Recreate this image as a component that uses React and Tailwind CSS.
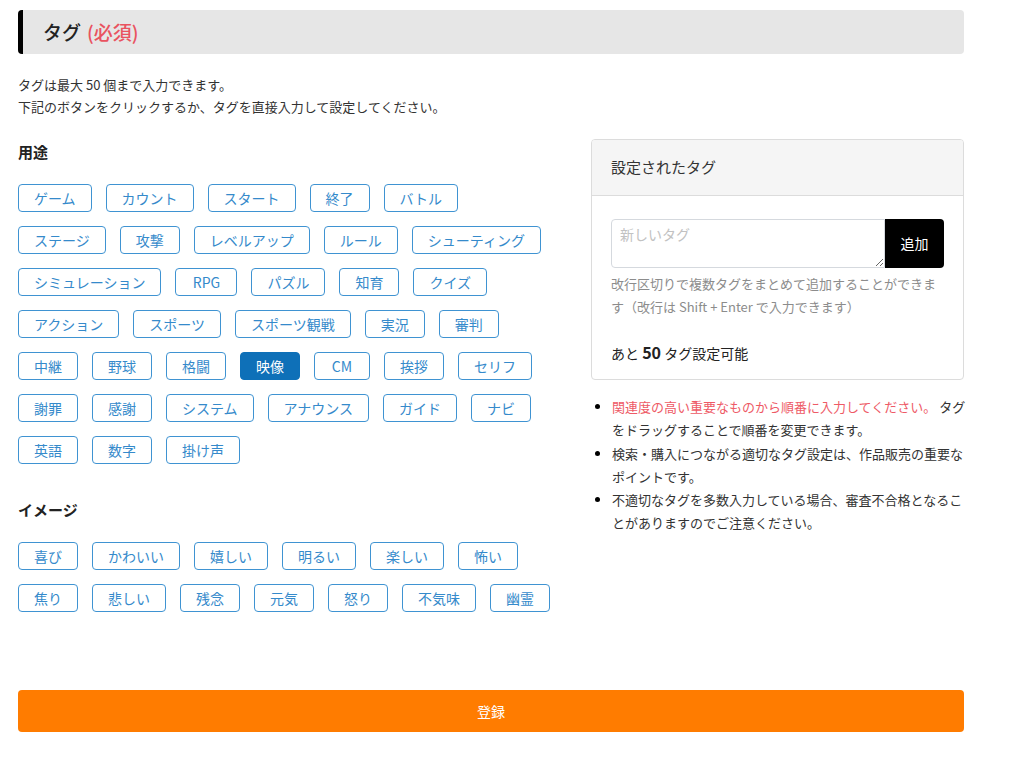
import React from "react";

const FONT = "font-['Noto_Sans_CJK_JP','Noto_Sans',sans-serif]";

const usage = [
  ["ゲーム"], ["カウント"], ["スタート"], ["終了"], ["バトル"],
  ["ステージ"], ["攻撃"], ["レベルアップ"], ["ルール"], ["シューティング"],
  ["シミュレーション"], ["RPG", "w-[62px]"], ["パズル"], ["知育"], ["クイズ"],
  ["アクション"], ["スポーツ"], ["スポーツ観戦"], ["実況"], ["審判"],
  ["中継"], ["野球"], ["格闘"], ["映像", "", true], ["CM", "w-[56px]"], ["挨拶"], ["セリフ"],
  ["謝罪"], ["感謝"], ["システム"], ["アナウンス"], ["ガイド"], ["ナビ"],
  ["英語"], ["数字"], ["掛け声"],
];

const image = [
  ["喜び"], ["かわいい"], ["嬉しい"], ["明るい"], ["楽しい"], ["怖い"],
  ["焦り"], ["悲しい"], ["残念"], ["元気"], ["怒り"], ["不気味"], ["幽霊"],
];

function Tag({ label, w = "", active = false }) {
  return (
    <button
      className={
        "h-[28px] rounded-[4px] border text-[14px] leading-none flex items-center justify-center " +
        w +
        (w ? " " : " px-[15px] ") +
        (active
          ? "bg-[#0e70b8] border-[#0e70b8] text-white"
          : "bg-white border-[#3f93d2] text-[#358acb]")
      }
    >
      {label}
    </button>
  );
}

function TagGroup({ items }) {
  return (
    <div className="flex flex-wrap gap-x-[14px] gap-y-[14px]">
      {items.map(([l, w, a]) => (
        <Tag key={l} label={l} w={w || ""} active={!!a} />
      ))}
    </div>
  );
}

export default function App() {
  return (
    <div className={"bg-white min-h-[778px] w-[1024px] text-[#222] " + FONT}>
      <div className="ml-[18px] w-[946px] pt-[10px]">
        <div className="h-[44px] bg-[#e6e6e6] border-l-[5px] border-black rounded-[4px] flex items-center pl-[20px]">
          <span className="text-[19px] font-medium text-[#222]">タグ</span>
          <span className="text-[19px] font-medium text-[#e9535f] ml-[6px]">(必須)</span>
        </div>

        <div className="mt-[20px] text-[13px] leading-[22px] text-[#333]">
          <p>タグは最大 50 個まで入力できます。</p>
          <p>下記のボタンをクリックするか、タグを直接入力して設定してください。</p>
        </div>

        <div className="flex mt-[20px]">
          <div className="w-[540px]">
            <h3 className="text-[15px] font-bold leading-[28px] text-[#222]">用途</h3>
            <div className="mt-[18px]">
              <TagGroup items={usage} />
            </div>
            <h3 className="text-[15px] font-bold leading-[28px] mt-[32px] text-[#222]">イメージ</h3>
            <div className="mt-[18px]">
              <TagGroup items={image} />
            </div>
          </div>

          <div className="ml-auto w-[373px] mt-[1px]">
            <div className="border border-[#dcdcdc] rounded-[4px] overflow-hidden">
              <div className="h-[56px] bg-[#f5f5f5] border-b border-[#dcdcdc] flex items-center px-[19px] text-[15px] text-[#333]">
                設定されたタグ
              </div>
              <div className="px-[19px] pt-[23px] pb-[14px]">
                <div className="flex h-[49px]">
                  <textarea
                    placeholder="新しいタグ"
                    className="flex-1 h-[49px] border border-[#d5d9de] rounded-l-[4px] px-[8px] py-[3px] text-[14px] leading-[22px] placeholder:text-[#c2c2c2] outline-none"
                  />
                  <button className="w-[59px] h-[49px] bg-black text-white text-[14px] rounded-r-[4px]">
                    追加
                  </button>
                </div>
                <p className="mt-[4px] text-[13px] leading-[23px] text-[#8c8c8c]">
                  改行区切りで複数タグをまとめて追加することができます（改行は Shift + Enter で入力できます）
                </p>
                <p className="mt-[22px] text-[14px] leading-[24px] text-[#222]">
                  あと <span className="font-bold text-[16px]">50</span> タグ設定可能
                </p>
              </div>
            </div>

            <ul className="mt-[15px] w-[380px] list-disc pl-[21px] text-[13px] leading-[23.3px] text-[#333] marker:text-black">
              <li>
                <span className="text-[#ee5a66]">関連度の高い重要なものから順番に入力してください。</span>
                {" "}タグをドラッグすることで順番を変更できます。
              </li>
              <li>検索・購入につながる適切なタグ設定は、作品販売の重要なポイントです。</li>
              <li>不適切なタグを多数入力している場合、審査不合格となることがありますのでご注意ください。</li>
            </ul>
          </div>
        </div>

        <button className="mt-[78px] w-full h-[42px] bg-[#ff7c00] rounded-[4px] text-white text-[14px]">
          登録
        </button>
      </div>
    </div>
  );
}
